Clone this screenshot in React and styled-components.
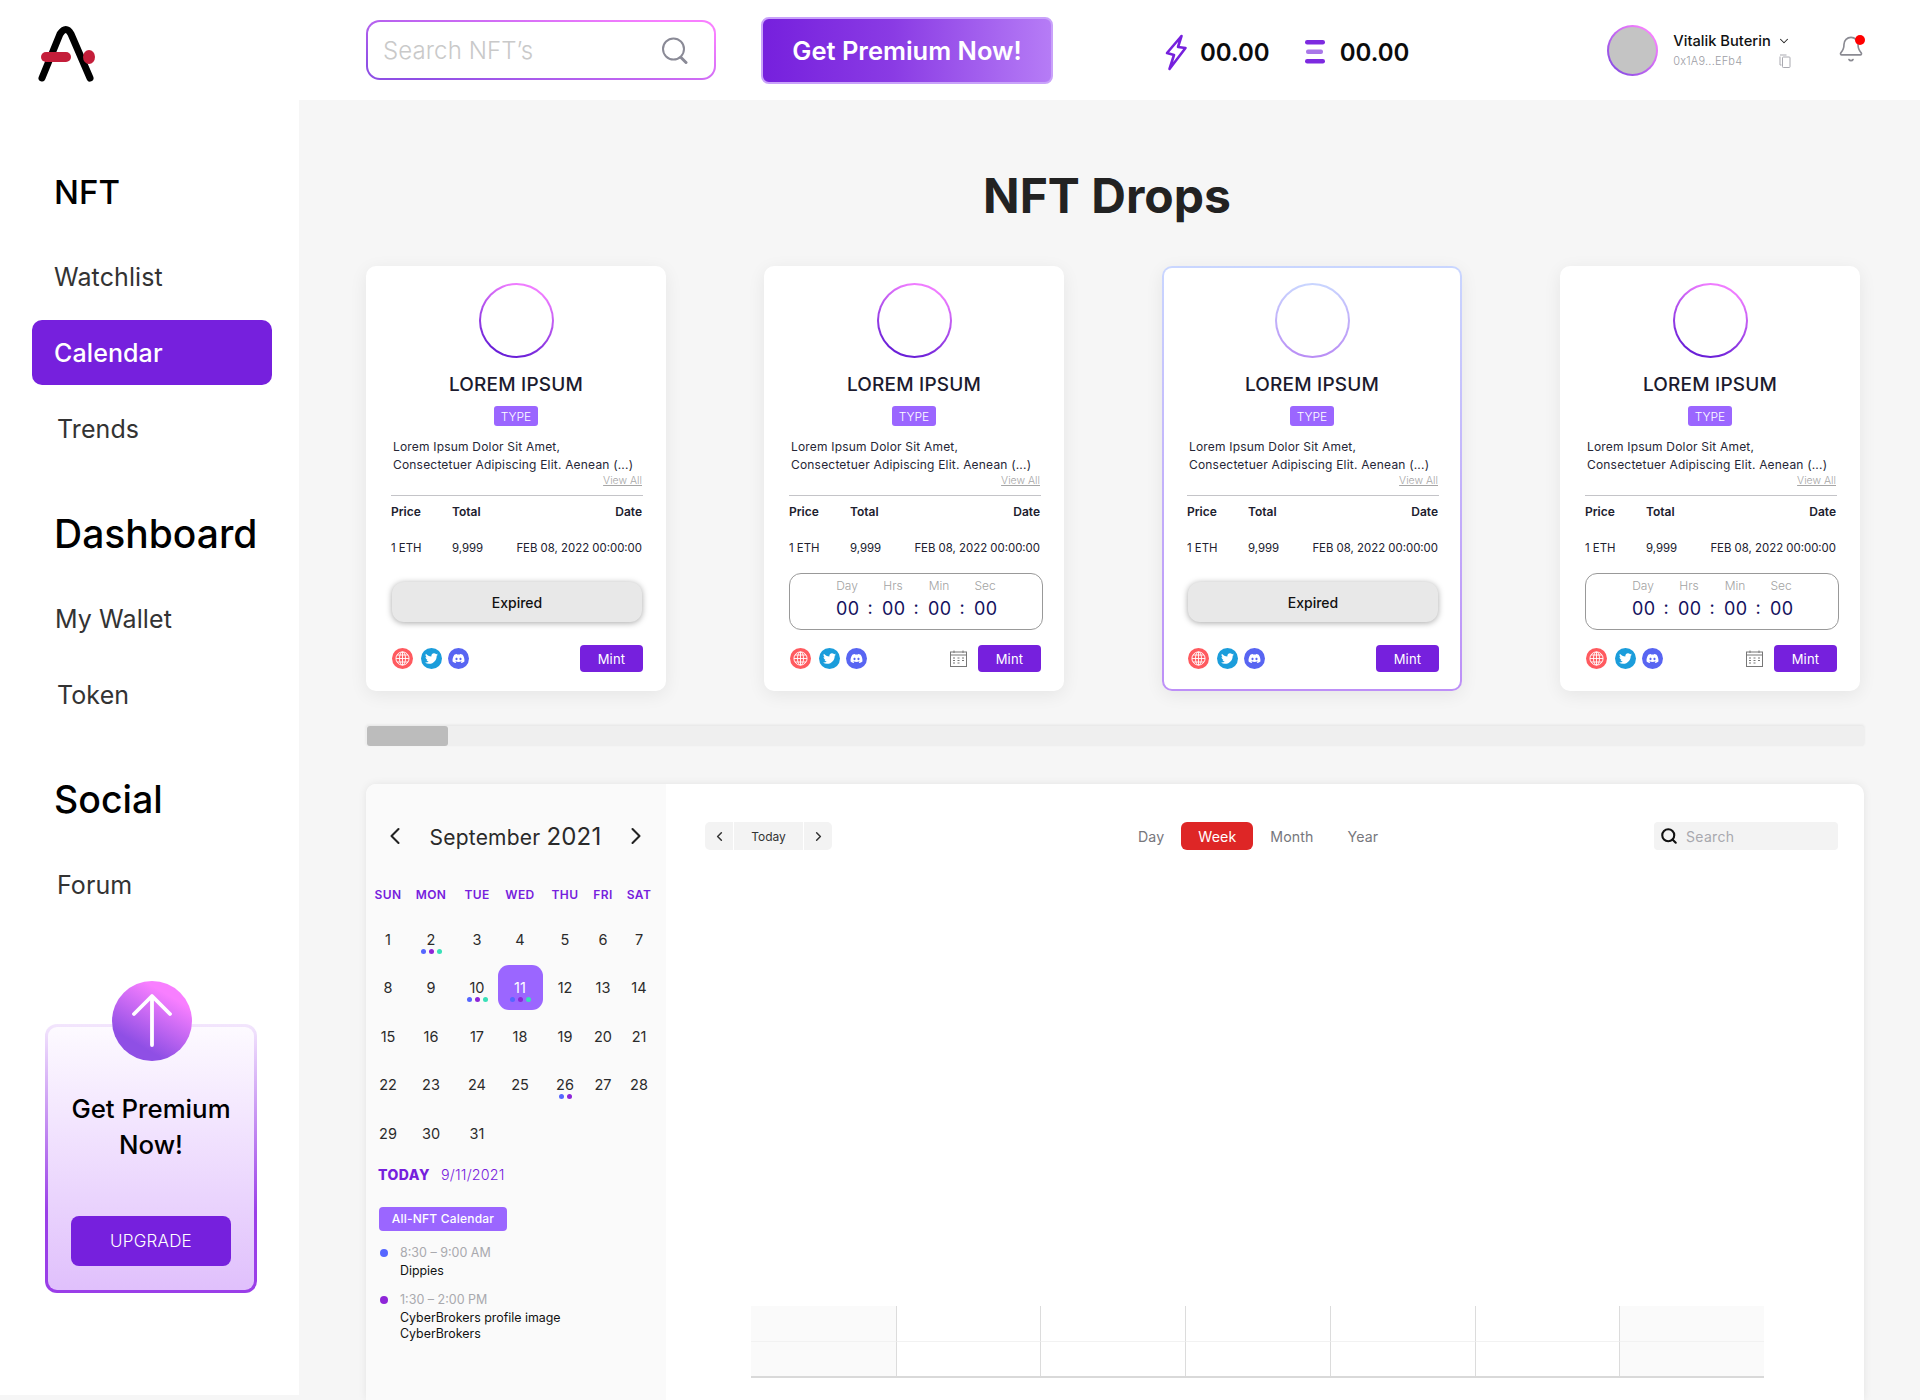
import React from "react";
import styled, { createGlobalStyle } from "styled-components";
import { ChevronLeft, ChevronRight, ChevronDown, Bell, Search as SearchGlyph } from "lucide-react";
import { FaTwitter, FaDiscord } from "react-icons/fa";

const Global = createGlobalStyle`
  html, body { margin: 0; padding: 0; background: #f6f6f6; }
  body { font-family: Inter, "Open Sans", "Liberation Sans", sans-serif; color: #111; }
  * { box-sizing: border-box; }
  #root { width: 1920px; height: 1400px; overflow: hidden; }
`;

const PURPLE = "#7620dd";
const VIOLET = "#9b66ff";
const GRAD = "linear-gradient(45deg, #8f4fe5 15%, #f87fff 85%)";

const Page = styled.div`width: 1920px; height: 1400px; display: flex; flex-direction: column; overflow: hidden;`;

const Header = styled.header`height: 100px; background: #fff; display: flex; align-items: center; flex: none;`;
const LogoBox = styled.div`width: 60px; height: 56px; margin: 8px 0 0 38px; flex: none;`;
const SearchBox = styled.div`
  margin-left: 268px; width: 350px; height: 60px; border: 2px solid transparent; border-radius: 14px;
  background: linear-gradient(#fff,#fff) padding-box, linear-gradient(15deg, #8f4fe5 10%, #f87fff 90%) border-box;
  display: flex; align-items: center; justify-content: space-between; padding: 0 26px 0 15px;
`;
const Placeholder = styled.span`font-size: 24px; font-weight: 300; color: #c9c9c9; letter-spacing: .1px;`;
const PremiumButton = styled.button`
  margin-left: 45px; width: 292px; height: 67px; border-radius: 8px; border: 2px solid #c9a2fa;
  background: linear-gradient(90deg, ${PURPLE} 0%, #8a3be4 45%, #b67cf6 100%);
  color: #fff; font: 600 25.5px Inter, sans-serif; padding: 0;
`;
const Stat = styled.div`display: flex; align-items: center; gap: ${p => p.$gap}px; margin-left: ${p => p.$left}px; margin-top: 4px;`;
const StatValue = styled.span`font-size: 24px; font-weight: 600; color: #0c0c0c;`;
const Avatar = styled.div`
  width: 51px; height: 51px; border-radius: 50%; border: 2px solid transparent; margin-left: 198px; flex: none;
  background: linear-gradient(#c4c4c4,#c4c4c4) padding-box, ${GRAD} border-box;
`;
const UserBlock = styled.div`margin-left: 15px; width: 118px; display: flex; flex-direction: column; gap: 4px;`;
const UserLine = styled.div`display: flex; align-items: center; justify-content: space-between;`;
const UserName = styled.span`font-size: 14.7px; font-weight: 500; color: #111; line-height: 18px;`;
const UserAddress = styled.span`font-size: 11px; font-weight: 300; color: #9d9da5; line-height: 14px; letter-spacing: .2px;`;
const BellBox = styled.div`position: relative; margin-left: 46px; width: 28px; height: 28px; margin-top: -2px; color: #8a8a92;`;
const BellDot = styled.span`position: absolute; right: 0; top: 0; width: 10px; height: 10px; border-radius: 50%; background: #f00;`;

const Body = styled.div`display: flex; flex: 1; min-height: 0;`;
const Sidebar = styled.aside`width: 299px; height: 1295px; background: #fff; padding-top: 70px; flex: none;`;
const SideHeading = styled.h2`
  margin: ${p => p.$top}px 0 30px 54px; font-size: ${p => p.$size}px; line-height: 44px; font-weight: 500; color: #000;
`;
const NavList = styled.div`display: flex; flex-direction: column; gap: 11px;`;
const NavItem = styled.div`
  margin-left: 32px; width: 240px; height: 65px; display: flex; align-items: center; border-radius: 10px;
  padding-left: ${p => p.$indent || 24}px; font-size: 25px; letter-spacing: .1px;
  font-weight: ${p => (p.$active ? 500 : 400)};
  color: ${p => (p.$active ? "#fff" : "#333")};
  background: ${p => (p.$active ? PURPLE : "transparent")};
`;
const Promo = styled.div`
  position: relative; margin: 107px 0 0 45px; width: 212px; height: 269px; border-radius: 12px;
  border: 3px solid transparent;
  background: linear-gradient(180deg, #fdfaff, #e0c0fc) padding-box, linear-gradient(180deg, #f3e6fd 0%, #9a3ee8 70%) border-box;
  display: flex; flex-direction: column; align-items: center; padding-top: 64px;
`;
const PromoCircle = styled.div`
  position: absolute; top: -46px; left: 64px; width: 80px; height: 80px; border-radius: 50%;
  background: linear-gradient(30deg, #8f4fe5 25%, #f87fff 78%); display: flex; align-items: center; justify-content: center;
`;
const PromoText = styled.div`font-size: 25.8px; line-height: 36px; font-weight: 500; text-align: center; color: #000; width: 190px;`;
const UpgradeButton = styled.button`
  margin-top: 53px; width: 160px; height: 50px; border: 0; border-radius: 8px; background: ${PURPLE}; color: #fff;
  font: 300 17px Inter, sans-serif; letter-spacing: .2px;
`;

const Main = styled.main`flex: 1; padding-left: 67px; min-width: 0; display: flex; flex-direction: column;`;
const Title = styled.h1`
  width: 1482px; margin: 66px 0 40px; height: 60px; line-height: 60px; text-align: center; font-size: 48px; font-weight: 700; color: #222;
`;
const CardRow = styled.div`display: flex; gap: 98px;`;
const Card = styled.article`
  width: 300px; height: 425px; border-radius: 10px; padding: 17px 23px 0 25px; display: flex; flex-direction: column;
  box-shadow: 0 4px 18px rgba(0,0,0,.07);
  ${p => p.$highlight
    ? `border: 2px solid transparent; padding: 15px 21px 0 23px; background: linear-gradient(#fff,#fff) padding-box, linear-gradient(180deg,#c9d6ff,#bd8ff7) border-box;`
    : `background: #fff;`}
`;
const CardCircle = styled.div`
  width: 75px; height: 75px; border-radius: 50%; border: 2px solid transparent; align-self: center; flex: none; margin-left: -1px;
  background: linear-gradient(#fff,#fff) padding-box,
    ${p => p.$soft ? "linear-gradient(180deg,#c9d6ff,#b98cf5)" : "linear-gradient(20deg, #6a1fd8 15%, #ef7cff 85%)"} border-box;
`;
const CardTitle = styled.h3`margin: 14px 2px 0 0; font-size: 19px; line-height: 26px; font-weight: 500; text-align: center; color: #1c1b2e; letter-spacing: .2px;`;
const TypeBadge = styled.span`
  margin: 8px 0 0 -2px; align-self: center; width: 44px; height: 20px; border-radius: 3px; background: ${VIOLET}; color: #fff;
  font-size: 12px; font-weight: 300; display: flex; align-items: center; justify-content: center;
`;
const Desc = styled.p`margin: 12px 0 0 2px; font-size: 12px; line-height: 18px; color: #262636; white-space: nowrap; letter-spacing: .19px;`;
const ViewAll = styled.span`
  align-self: flex-end; margin: 1px 1px 0 0; font-size: 10.5px; line-height: 12px; color: #a6a6a6; text-decoration: underline; font-weight: 300;
`;
const Divider = styled.hr`width: 100%; height: 1px; margin: 8px 0 0; background: #c4c4c8; border: 0; flex: none;`;
const InfoRow = styled.div`
  display: grid; grid-template-columns: 61px 1fr auto; margin: ${p => p.$top}px 1px 0 0; line-height: 16px; font-size: ${p => (p.$head ? 12 : 11.4)}px;
  font-weight: ${p => (p.$head ? 600 : 400)}; color: #20202e;
`;
const StatusSlot = styled.div`margin-top: 17px; height: 56px; flex: none; display: flex; align-items: center;`;
const Expired = styled.div`
  margin: 2px 0 0 1px; width: 250px; height: 40px; border-radius: 12px; background: #e8e8e8; box-shadow: 0 1px 6px rgba(0,0,0,.35);
  display: flex; align-items: center; justify-content: center; font-size: 14px; font-weight: 500; color: #111;
`;
const Timer = styled.div`
  width: 254px; height: 57px; flex: none; border: 1.5px solid #999; border-radius: 12px; display: flex; flex-direction: column; align-items: center; padding-top: 4px;
`;
const TimerLabels = styled.div`display: flex;`;
const TimerLabel = styled.span`width: 46px; text-align: center; font-size: 12px; line-height: 15px; font-weight: 300; color: #a3a3a3;`;
const TimerDigits = styled.div`display: flex; margin-top: 4px;`;
const Digit = styled.span`width: 22px; text-align: center; font-size: 18px; line-height: 24px; color: #14115e; letter-spacing: .5px;`;
const Colon = styled.span`width: 24px; text-align: center; font-size: 18px; line-height: 22px; color: #14115e;`;
const CardFooter = styled.div`margin-top: 16px; height: 27px; display: flex; align-items: center; padding-left: 1px;`;
const Social = styled.span`
  width: 21px; height: 21px; border-radius: 50%; background: ${p => p.$bg}; margin-right: ${p => p.$gap}px; flex: none;
  display: flex; align-items: center; justify-content: center; color: #fff;
`;
const CalGlyph = styled.span`margin-left: auto; margin-right: 11px; display: flex;`;
const MintButton = styled.button`
  margin-left: ${p => (p.$auto ? "auto" : "0")}; width: 63px; height: 27px; border: 0; border-radius: 4px; background: ${PURPLE}; color: #fff;
  font: 400 13px Inter, sans-serif; letter-spacing: .2px; padding: 0; flex: none;
`;

const Track = styled.div`
  margin-top: 35px; width: 1498px; height: 20px; background: #efefef; box-shadow: 0 -1px 3px rgba(0,0,0,.08); border-radius: 2px; padding-left: 1px; flex: none;
`;
const Thumb = styled.div`width: 81px; height: 20px; background: #bcbcbc; border-radius: 3px;`;

const Panel = styled.section`
  margin-top: 38px; width: 1498px; height: 616px; flex: none; border-radius: 10px 10px 0 0; background: #fff; display: flex; overflow: hidden;
  box-shadow: 0 0 8px rgba(0,0,0,.08);
`;
const CalPane = styled.div`width: 300px; background: #fafafa; padding-top: 37px; flex: none;`;
const MonthRow = styled.div`height: 30px; display: flex; align-items: center; justify-content: space-between; padding: 0 16px 0 15px; color: #222;`;
const MonthTitle = styled.div`font-size: 21px; font-weight: 400; color: #2a2a2a; letter-spacing: .2px;`;
const Year = styled.span`font-size: 24px;`;
const COLS = "44px 42px 50px 36px 54px 22px 50px";
const WeekRow = styled.div`
  margin-top: 36px; display: grid; grid-template-columns: ${COLS}; justify-items: center; font-size: 12px; line-height: 16px; font-weight: 600; color: ${PURPLE}; letter-spacing: .4px;
`;
const DateGrid = styled.div`margin-top: 12px; display: grid; grid-template-columns: ${COLS}; grid-auto-rows: 48.5px; justify-items: center; align-items: center;`;
const DateCell = styled.div`
  position: relative; width: 45px; height: 45px; flex: none; display: flex; align-items: center; justify-content: center;
  font-size: 14.5px; color: ${p => (p.$selected ? "#fff" : "#2b2b2b")}; border-radius: 11px;
  background: ${p => (p.$selected ? VIOLET : "transparent")};
`;
const Dots = styled.span`position: absolute; left: 0; right: 0; top: 32px; display: flex; justify-content: center; gap: 3px;`;
const Dot = styled.i`width: 5px; height: 5px; border-radius: 50%; background: ${p => p.$c};`;
const TodayRow = styled.div`margin: 7px 0 0 12px; height: 20px; display: flex; align-items: center; gap: 11px; color: ${PURPLE};`;
const TodayLabel = styled.span`font-size: 14px; font-weight: 800; letter-spacing: .5px;`;
const TodayDate = styled.span`font-size: 14.3px; font-weight: 300; letter-spacing: .2px;`;
const Chip = styled.div`
  margin: 22px 0 0 13px; width: 128px; height: 24px; border-radius: 4px; background: ${VIOLET}; color: #fff; font-size: 12px; font-weight: 500;
  display: flex; align-items: center; justify-content: center; letter-spacing: .2px;
`;
const Events = styled.div`margin: 13px 0 0 14px; display: flex; flex-direction: column; gap: 12px;`;
const Event = styled.div`display: grid; grid-template-columns: 20px 1fr; align-items: center;`;
const EventDot = styled.i`width: 8px; height: 8px; border-radius: 50%; background: ${p => p.$c};`;
const EventTime = styled.span`font-size: 12.5px; line-height: 18px; color: #a9a9ae; font-weight: 400;`;
const EventName = styled.span`grid-column: 2; font-size: 12.4px; line-height: 16px; color: #111; padding-top: 1px;`;

const ViewPane = styled.div`flex: 1; display: flex; flex-direction: column; padding: 38px 26px 22px 39px; min-width: 0;`;
const Toolbar = styled.div`display: flex; align-items: center; height: 28px;`;
const NavGroup = styled.div`width: 127px; height: 28px; display: flex; background: #f3f3f3; border-radius: 5px; overflow: hidden;`;
const NavCell = styled.div`
  width: ${p => p.$w}px; display: flex; align-items: center; justify-content: center; font-size: 12px; color: #333;
  border-left: ${p => (p.$sep ? "1px solid #fff" : "0")}; border-right: ${p => (p.$sep ? "1px solid #fff" : "0")};
`;
const Tabs = styled.div`display: flex; margin-left: 289px;`;
const Tab = styled.div`
  height: 28px; padding: 0 17px; border-radius: 6px; display: flex; align-items: center; font-size: 14.2px; letter-spacing: .1px;
  color: ${p => (p.$active ? "#fff" : "#77777d")}; background: ${p => (p.$active ? "#de2626" : "transparent")};
`;
const MiniSearch = styled.div`
  margin-left: auto; width: 184px; height: 28px; background: #f3f3f3; border-radius: 4px; display: flex; align-items: center; gap: 8px; padding-left: 6px;
  font-size: 14px; color: #a8a8ae; font-weight: 400; letter-spacing: .3px;
`;
const WeekGrid = styled.div`
  margin-top: auto; margin-left: 46px; width: 1013px; height: 72px; display: grid; grid-template-columns: repeat(7, 1fr); grid-template-rows: 1fr 1fr;
  border-bottom: 2px solid #d9d9d9;
`;
const WeekCell = styled.div`
  background: ${p => (p.$off ? "#fafafa" : "#fff")};
  border-left: ${p => (p.$first ? "0" : "1px solid #dcdcdc")};
  border-top: ${p => (p.$lower ? "1px solid #f2f2f2" : "0")};
`;

const Logo = () => (
  <svg width="60" height="56" viewBox="0 0 60 56" fill="none">
    <path d="M4 52 L22 8 Q28 -1 33 8 L52 52" stroke="#000" strokeWidth="7" strokeLinecap="round" strokeLinejoin="round" />
    <rect x="3" y="26" width="30" height="10" rx="5" fill="#c41e3a" />
    <ellipse cx="51" cy="31" rx="6" ry="7" fill="#c41e3a" />
  </svg>
);
const SearchIcon = () => (
  <svg width="27" height="27" viewBox="0 0 27 27" fill="none" stroke="#8a8a96" strokeWidth="2" strokeLinecap="round">
    <circle cx="12.5" cy="12" r="10.5" />
    <path d="M20 20.5 L25 25.5" strokeWidth="3" />
  </svg>
);
const Bolt = () => (
  <svg width="24" height="37" viewBox="0 0 24 37" fill="none" stroke={PURPLE} strokeWidth="2.6" strokeLinejoin="round">
    <path d="M17.5 2 L3 19 L10 21 L5.5 35 L21.5 14 L14 13 Z" />
  </svg>
);
const Eth = () => (
  <svg width="20" height="24" viewBox="0 0 20 24">
    <rect width="20" height="4.5" y="0" rx="2.2" fill="#7d2ae0" />
    <rect width="17" height="4.5" y="9.5" x="1" rx="2" fill="#a977e8" />
    <rect width="20" height="4.5" y="19" rx="2.2" fill="#7d2ae0" />
  </svg>
);
const Copy = () => (
  <svg width="12" height="14" viewBox="0 0 12 14" fill="none" stroke="#a9a9b0" strokeWidth="1">
    <path d="M1 2.5 V11 H2.5" /><path d="M1 1 H7.5" />
    <rect x="3.5" y="3" width="7.5" height="10.5" rx=".8" />
  </svg>
);
const Globe = () => (
  <svg width="15" height="15" viewBox="0 0 15 15" fill="none" stroke="#fff" strokeWidth=".9">
    <circle cx="7.5" cy="7.5" r="6.6" />
    <ellipse cx="7.5" cy="7.5" rx="3" ry="6.6" />
    <path d="M7.5 1 V14 M1 7.5 H14 M2 4 H13 M2 11 H13" />
  </svg>
);
const CalendarIcon = () => (
  <svg width="17" height="17" viewBox="0 0 17 17" fill="none" stroke="#777" strokeWidth="1">
    <rect x=".5" y="2" width="16" height="14.5" />
    <path d="M.5 5 H16.5 M4 .5 V3 M13 .5 V3" />
    <path d="M3 8 H5 M7.5 8 H9.5 M12 8 H14 M3 10.5 H5 M7.5 10.5 H9.5 M12 10.5 H14 M3 13 H5 M7.5 13 H9.5" />
  </svg>
);
const UpArrow = () => (
  <svg width="40" height="56" viewBox="0 0 40 56" fill="none" stroke="#fff" strokeWidth="3.8" strokeLinecap="round" strokeLinejoin="round">
    <path d="M20 52 V4 M2 21 L20 3 L38 21" />
  </svg>
);

const DropCard = ({ timer, highlight }) => (
  <Card $highlight={highlight}>
    <CardCircle $soft={highlight} />
    <CardTitle>LOREM IPSUM</CardTitle>
    <TypeBadge>TYPE</TypeBadge>
    <Desc>Lorem Ipsum Dolor Sit Amet,<br />Consectetuer Adipiscing Elit. Aenean (...)</Desc>
    <ViewAll>View All</ViewAll>
    <Divider />
    <InfoRow $head $top={8}><span>Price</span><span>Total</span><span>Date</span></InfoRow>
    <InfoRow $top={20}><span>1 ETH</span><span>9,999</span><span>FEB 08, 2022 00:00:00</span></InfoRow>
    <StatusSlot>
      {timer ? (
        <Timer>
          <TimerLabels>{["Day", "Hrs", "Min", "Sec"].map(l => <TimerLabel key={l}>{l}</TimerLabel>)}</TimerLabels>
          <TimerDigits>
            <Digit>00</Digit><Colon>:</Colon><Digit>00</Digit><Colon>:</Colon><Digit>00</Digit><Colon>:</Colon><Digit>00</Digit>
          </TimerDigits>
        </Timer>
      ) : <Expired>Expired</Expired>}
    </StatusSlot>
    <CardFooter>
      <Social $bg="#ff5a5f" $gap={8}><Globe /></Social>
      <Social $bg="#1b9ddb" $gap={6}><FaTwitter size={13} /></Social>
      <Social $bg="#5865f2" $gap={0}><FaDiscord size={13} /></Social>
      {timer && <CalGlyph><CalendarIcon /></CalGlyph>}
      <MintButton $auto={!timer}>Mint</MintButton>
    </CardFooter>
  </Card>
);

const dots3 = ["#5566ff", "#8e25d8", "#38e0b8"];
const dots2 = ["#5566ff", "#8e25d8"];
const dotMap = { 2: dots3, 10: dots3, 11: dots3, 26: dots2 };
const days = Array.from({ length: 31 }, (_, i) => i + 1);

export default function App() {
  return (
    <Page>
      <Global />
      <Header>
        <LogoBox><Logo /></LogoBox>
        <SearchBox><Placeholder>Search NFT’s</Placeholder><SearchIcon /></SearchBox>
        <PremiumButton>Get Premium Now!</PremiumButton>
        <Stat $left={111} $gap={12}><Bolt /><StatValue>00.00</StatValue></Stat>
        <Stat $left={35} $gap={15}><Eth /><StatValue>00.00</StatValue></Stat>
        <Avatar />
        <UserBlock>
          <UserLine><UserName>Vitalik Buterin</UserName><ChevronDown size={14} strokeWidth={1.8} color="#222" /></UserLine>
          <UserLine><UserAddress>0x1A9...EFb4</UserAddress><Copy /></UserLine>
        </UserBlock>
        <BellBox><Bell size={28} strokeWidth={1.4} /><BellDot /></BellBox>
      </Header>
      <Body>
        <Sidebar>
          <SideHeading $top={0} $size={33}>NFT</SideHeading>
          <NavList>
            <NavItem $indent={22}>Watchlist</NavItem>
            <NavItem $active $indent={22}>Calendar</NavItem>
            <NavItem $indent={25}>Trends</NavItem>
          </NavList>
          <SideHeading $top={51} $size={39}>Dashboard</SideHeading>
          <NavList>
            <NavItem $indent={23}>My Wallet</NavItem>
            <NavItem $indent={25}>Token</NavItem>
          </NavList>
          <SideHeading $top={51} $size={37.5}>Social</SideHeading>
          <NavList>
            <NavItem $indent={25}>Forum</NavItem>
          </NavList>
          <Promo>
            <PromoCircle><UpArrow /></PromoCircle>
            <PromoText>Get Premium Now!</PromoText>
            <UpgradeButton>UPGRADE</UpgradeButton>
          </Promo>
        </Sidebar>
        <Main>
          <Title>NFT Drops</Title>
          <CardRow>
            <DropCard />
            <DropCard timer />
            <DropCard highlight />
            <DropCard timer />
          </CardRow>
          <Track><Thumb /></Track>
          <Panel>
            <CalPane>
              <MonthRow>
                <ChevronLeft size={28} strokeWidth={1.8} />
                <MonthTitle>September <Year>2021</Year></MonthTitle>
                <ChevronRight size={28} strokeWidth={1.8} />
              </MonthRow>
              <WeekRow>{["SUN", "MON", "TUE", "WED", "THU", "FRI", "SAT"].map(d => <span key={d}>{d}</span>)}</WeekRow>
              <DateGrid>
                {days.map(d => (
                  <DateCell key={d} $selected={d === 11}>
                    {d}
                    {dotMap[d] && <Dots>{dotMap[d].map(c => <Dot key={c} $c={c} />)}</Dots>}
                  </DateCell>
                ))}
              </DateGrid>
              <TodayRow><TodayLabel>TODAY</TodayLabel><TodayDate>9/11/2021</TodayDate></TodayRow>
              <Chip>All-NFT Calendar</Chip>
              <Events>
                <Event>
                  <EventDot $c="#5566ff" />
                  <EventTime>8:30 – 9:00 AM</EventTime>
                  <EventName>Dippies</EventName>
                </Event>
                <Event>
                  <EventDot $c="#8e25d8" />
                  <EventTime>1:30 – 2:00 PM</EventTime>
                  <EventName>CyberBrokers profile image<br />CyberBrokers</EventName>
                </Event>
              </Events>
            </CalPane>
            <ViewPane>
              <Toolbar>
                <NavGroup>
                  <NavCell $w={28}><ChevronLeft size={15} strokeWidth={2.4} /></NavCell>
                  <NavCell $w={71} $sep>Today</NavCell>
                  <NavCell $w={28}><ChevronRight size={15} strokeWidth={2.4} /></NavCell>
                </NavGroup>
                <Tabs>
                  <Tab>Day</Tab><Tab $active>Week</Tab><Tab>Month</Tab><Tab>Year</Tab>
                </Tabs>
                <MiniSearch><SearchGlyph size={18} strokeWidth={2.8} color="#111" />Search</MiniSearch>
              </Toolbar>
              <WeekGrid>
                {[0, 1].map(r => [0, 1, 2, 3, 4, 5, 6].map(c => (
                  <WeekCell key={`${r}-${c}`} $off={c === 0 || c === 6} $first={c === 0} $lower={r === 1} />
                )))}
              </WeekGrid>
            </ViewPane>
          </Panel>
        </Main>
      </Body>
    </Page>
  );
}
